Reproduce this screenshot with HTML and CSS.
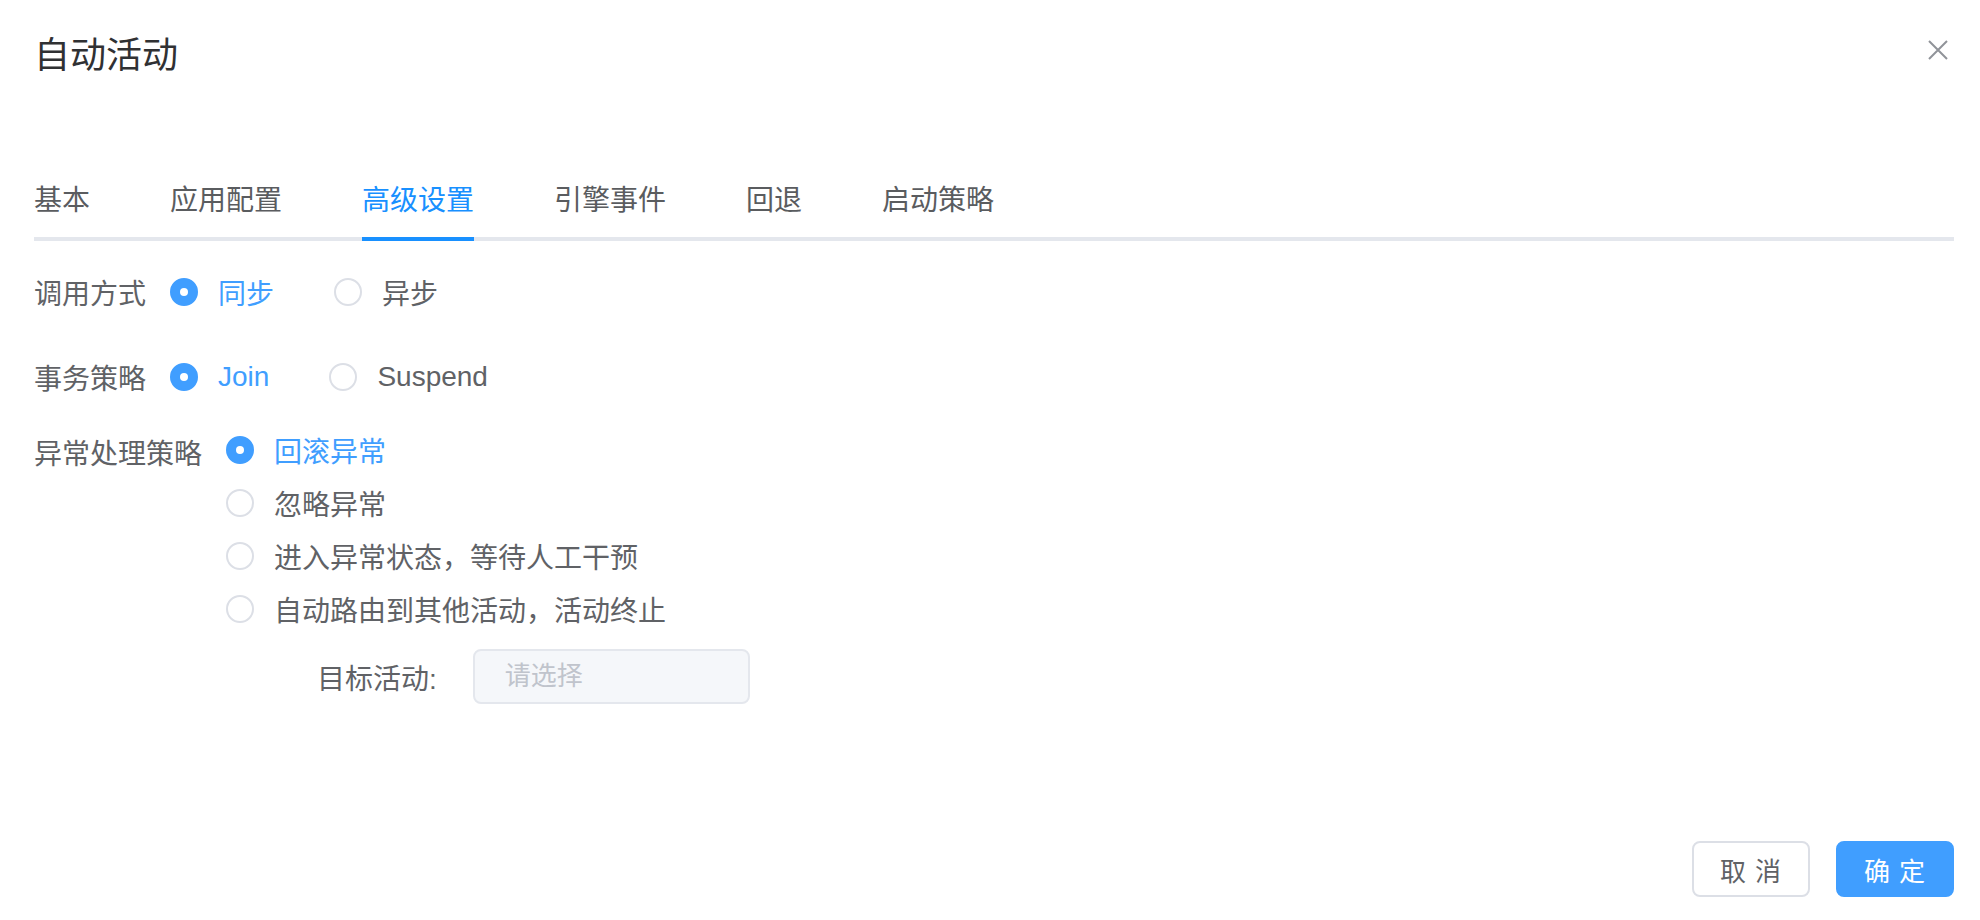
FILE: index.html
```html
<html>
<head>
    <meta charset="utf-8">
    <link rel="stylesheet" href="styles.css">
</head>
<body>
    <div class="dialog">
        <div class="dialog_header">
            <span class="dialog_title">自动活动</span>
            <span class="dialog_close">
                <svg width="20" height="20" viewBox="0 0 20 20"><path d="M1 1 L19 19 M19 1 L1 19" stroke="#909399" stroke-width="2" fill="none"/></svg>
            </span>
        </div>

        <div class="tabs">
            <div class="tab"><span>基本</span></div>
            <div class="tab"><span>应用配置</span></div>
            <div class="tab active"><span>高级设置</span></div>
            <div class="tab"><span>引擎事件</span></div>
            <div class="tab"><span>回退</span></div>
            <div class="tab"><span>启动策略</span></div>
        </div>

        <div class="form">
            <div class="form_row first">
                <span class="form_label">调用方式</span>
                <label class="radio checked"><span class="radio_box"></span><span class="radio_text">同步</span></label>
                <label class="radio"><span class="radio_box"></span><span class="radio_text">异步</span></label>
            </div>
            <div class="form_row">
                <span class="form_label">事务策略</span>
                <label class="radio checked"><span class="radio_box"></span><span class="radio_text">Join</span></label>
                <label class="radio"><span class="radio_box"></span><span class="radio_text">Suspend</span></label>
            </div>
            <div class="form_row tall">
                <span class="form_label">异常处理策略</span>
                <div class="radio_group">
                    <label class="radio line checked"><span class="radio_box"></span><span class="radio_text">回滚异常</span></label>
                    <label class="radio line"><span class="radio_box"></span><span class="radio_text">忽略异常</span></label>
                    <label class="radio line"><span class="radio_box"></span><span class="radio_text">进入异常状态，等待人工干预</span></label>
                    <label class="radio line"><span class="radio_box"></span><span class="radio_text">自动路由到其他活动，活动终止</span></label>
                    <div class="target_row">
                        <span class="target_label">目标活动:</span>
                        <input class="select_input" type="text" placeholder="请选择" readonly>
                    </div>
                </div>
            </div>
        </div>

        <div class="dialog_footer">
            <button class="btn">取 消</button>
            <button class="btn primary">确 定</button>
        </div>
    </div>
</body>
</html>
```

FILE: styles.css
```css
body {
    margin: 0;
    background: #ffffff;
    font-family: "Liberation Sans", "Noto Sans CJK SC", sans-serif;
}
.dialog {
    min-height: 920px;
    box-sizing: border-box;
    padding: 32px 26px 23px 34px;
    display: flex;
    flex-direction: column;
}
.dialog_header {
    display: flex;
    justify-content: space-between;
}
.dialog_title {
    font-size: 36px;
    line-height: 48px;
    color: #303133;
}
.dialog_close {
    width: 20px;
    height: 20px;
    margin-top: 8px;
    margin-right: 6px;
}
.dialog_close svg {
    display: block;
}

.tabs {
    margin-top: 81px;
    display: flex;
    border-bottom: 4px solid #E4E7ED;
}
.tab {
    padding: 0 40px;
    margin-bottom: -4px;
    font-size: 28px;
    color: #5a5c5f;
}
.tab:first-child {
    padding-left: 0;
}
.tab span {
    display: block;
    height: 76px;
    line-height: 80px;
    border-bottom: 4px solid transparent;
}
.tab.active {
    color: #1890ff;
}
.tab.active span {
    border-bottom-color: #1890ff;
}

.form_row {
    display: flex;
    align-items: center;
    height: 80px;
    margin-top: 5px;
}
.form_row.first {
    margin-top: 11px;
}
.form_row.tall {
    height: auto;
    align-items: flex-start;
    margin-top: 6px;
}
.form_label {
    font-size: 28px;
    color: #606266;
    margin-right: 24px;
}
.form_row.tall .form_label {
    padding-top: 4px;
    line-height: 56px;
}

.radio {
    display: flex;
    align-items: center;
    margin-right: 60px;
    font-size: 28px;
    color: #606266;
}
.radio.line {
    height: 53px;
    margin-right: 0;
}
.radio_box {
    width: 28px;
    height: 28px;
    box-sizing: border-box;
    border: 2px solid #DCDFE6;
    border-radius: 50%;
    background: #ffffff;
    display: flex;
    align-items: center;
    justify-content: center;
}
.radio.checked .radio_box {
    background: #409EFF;
    border-color: #409EFF;
}
.radio.checked .radio_box::after {
    content: "";
    width: 8px;
    height: 8px;
    border-radius: 50%;
    background: #ffffff;
}
.radio_text {
    margin-left: 20px;
}
.radio.checked .radio_text {
    color: #409EFF;
}

.radio_group {
    display: flex;
    flex-direction: column;
}
.target_row {
    display: flex;
    align-items: center;
    margin-top: 14px;
    padding-left: 91px;
}
.target_label {
    font-size: 28px;
    color: #606266;
    margin-right: 36px;
}
.select_input {
    width: 277px;
    height: 55px;
    box-sizing: border-box;
    border: 2px solid #E4E7ED;
    border-radius: 8px;
    background: #F5F7FA;
    padding: 0 30px;
    font-family: inherit;
    font-size: 26px;
    outline: none;
}
.select_input::placeholder {
    color: #C0C4CC;
}

.dialog_footer {
    margin-top: auto;
    display: flex;
    justify-content: flex-end;
    gap: 26px;
}
.btn {
    width: 118px;
    height: 56px;
    box-sizing: border-box;
    border: 2px solid #DCDFE6;
    border-radius: 8px;
    background: #ffffff;
    color: #606266;
    font-family: inherit;
    font-size: 26px;
    letter-spacing: 1px;
    padding: 0;
}
.btn.primary {
    background: #409EFF;
    border-color: #409EFF;
    color: #ffffff;
}
```
